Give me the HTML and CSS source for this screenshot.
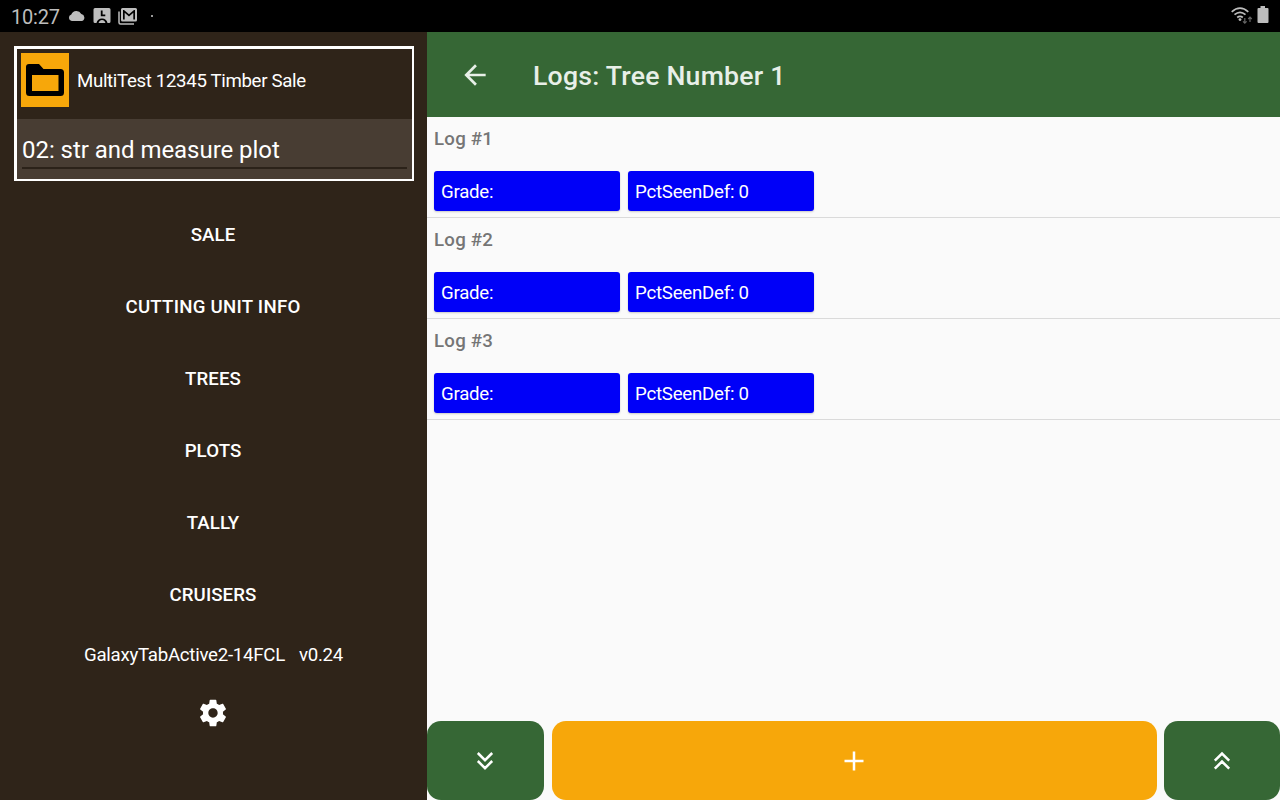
FILE: index.html
```html
<!DOCTYPE html>
<html lang="en">
<head>
<meta charset="utf-8">
<title>Logs</title>
<link rel="stylesheet" href="styles.css">
</head>
<body>
<div class="status">
  <span class="clock">10:27</span>
  <svg class="s-cloud" width="18" height="12" viewBox="0 0 18 12"><path d="M3.800 11A3.400 3.400 0 0 1 3.300 4.400 5.600 5.600 0 0 1 13.300 3.900 3.700 3.700 0 0 1 14 11Z"/></svg>
  <svg class="s-clock" width="18" height="16" viewBox="0 0 18 16"><path fill-rule="evenodd" d="M2 0H16Q17.500 0 17.500 1.500V13.500Q17.500 15 16 15H14.500Q13.500 10.500 9 10.500T3.500 15H2Q.5 15 .5 13.500V1.500Q.5 0 2 0ZM7.800 2.500V8.200H12.300V6.400H9.600V2.500Z"/><path d="M5.500 15Q6.500 12 9 12T12.500 15Z"/></svg>
  <svg class="s-mail" width="20" height="17" viewBox="0 0 20 17"><path d="M1 3.500V14.500Q1 16 2.500 16H16" fill="none" stroke="#bdbdbd" stroke-width="1.500"/><path fill-rule="evenodd" d="M4.500 0H17.500Q19 0 19 1.500V12Q19 13.500 17.500 13.500H4.500Q3 13.500 3 12V1.500Q3 0 4.500 0ZM5 2V11.500H6.700V4.700L11 8.400 15.300 4.700V11.500H17V2H16L11 6.200 6 2Z"/></svg>
  <i class="dot"></i>
  <span class="grow"></span>
  <svg class="s-wifi" width="22" height="18" viewBox="0 0 22 18"><g fill="none" stroke="#bdbdbd" stroke-width="1.700"><path d="M.7 4.800Q9 -2.700 17.300 4.800M3.500 7.700Q9 2.900 14.500 7.700M6.200 10.500Q9 8.100 11.800 10.500"/></g><circle cx="9" cy="12.600" r="1.400"/><path d="M13.800 11V16M12 14.300 13.800 16.200 15.600 14.300M19 15V10.500M17.200 12 19 10.200 20.800 12" fill="none" stroke="#666" stroke-width="1.200"/></svg>
  <svg class="s-batt" width="12" height="18" viewBox="0 0 12 18"><path d="M3.500 0H8V2H10.500Q11.500 2 11.500 3V16Q11.500 17 10.500 17H1.500Q.5 17 .5 16V3Q.5 2 1.500 2H3.500Z"/></svg>
</div>
<div class="app">
  <aside class="side">
    <div class="sale-box">
      <div class="sale-row">
        <span class="folder"><svg width="48" height="54" viewBox="0 0 48 54"><path fill-rule="evenodd" d="M8 11H18L22.500 16H39.500Q43 16 43 19.500V39.500Q43 43 39.500 43H8.500Q5 43 5 39.500V14Q5 11 8 11ZM11 22V38H37.500V22Z"/></svg></span>
        <span class="sale-name">MultiTest 12345 Timber Sale</span>
      </div>
      <div class="spinner"><span>02: str and measure plot</span></div>
    </div>
    <nav class="menu">
      <a>SALE</a><a class="wide">CUTTING UNIT INFO</a><a>TREES</a><a>PLOTS</a><a>TALLY</a><a>CRUISERS</a>
    </nav>
    <div class="device"><span>GalaxyTabActive2-14FCL</span><span>v0.24</span></div>
    <svg class="gear" width="32" height="32" viewBox="0 0 24 24"><path d="M19.430 12.980c.04-.32.07-.64.07-.98s-.03-.66-.07-.98l2.110-1.650c.19-.15.24-.42.12-.64l-2-3.460c-.12-.22-.39-.3-.61-.22l-2.490 1c-.52-.4-1.080-.73-1.690-.98l-.38-2.650C14.460 2.180 14.250 2 14 2h-4c-.25 0-.46.18-.49.42l-.38 2.650c-.61.25-1.170.59-1.690.98l-2.490-1c-.23-.09-.49 0-.61.22l-2 3.460c-.13.22-.07.49.12.64l2.110 1.650c-.04.32-.07.65-.07.98s.03.66.07.98l-2.110 1.650c-.19.15-.24.42-.12.64l2 3.460c.12.22.39.3.61.22l2.490-1c.52.4 1.080.73 1.690.98l.38 2.650c.03.24.24.42.49.42h4c.25 0 .46-.18.49-.42l.38-2.650c.61-.25 1.170-.59 1.690-.98l2.490 1c.23.09.49 0 .61-.22l2-3.460c.12-.22.07-.49-.12-.64l-2.110-1.650zM12 15.500c-1.930 0-3.500-1.570-3.500-3.500s1.570-3.500 3.500-3.500 3.500 1.570 3.500 3.500-1.570 3.500-3.500 3.500z"/></svg>
  </aside>
  <main class="main">
    <header class="bar">
      <svg width="32" height="32" viewBox="0 0 24 24"><path d="M20 11H7.830l5.590-5.590L12 4l-8 8 8 8 1.410-1.410L7.830 13H20v-2z"/></svg>
      <h1>Logs: Tree Number 1</h1>
    </header>
    <section class="logs">
      <article><h2>Log #1</h2><div class="fields"><span class="field">Grade:</span><span class="field">PctSeenDef: 0</span></div></article>
      <article><h2>Log #2</h2><div class="fields"><span class="field">Grade:</span><span class="field">PctSeenDef: 0</span></div></article>
      <article><h2>Log #3</h2><div class="fields"><span class="field">Grade:</span><span class="field">PctSeenDef: 0</span></div></article>
    </section>
    <footer class="actions">
      <button class="btn down"><svg width="18" height="20" viewBox="0 0 18 20"><path d="M1.800 2 9 9.200 16.200 2M1.800 10 9 17.200 16.200 10"/></svg></button>
      <button class="btn add"><svg width="20" height="20" viewBox="0 0 20 20"><path d="M10 .5V19.500M.5 10H19.500"/></svg></button>
      <button class="btn"><svg width="18" height="20" viewBox="0 0 18 20"><path d="M1.800 9.700 9 2.500 16.200 9.700M1.800 17.700 9 10.500 16.200 17.700"/></svg></button>
    </footer>
  </main>
</div>
</body>
</html>
```
FILE: styles.css
```css
* { box-sizing: border-box; }
body { margin: 0; width: 1280px; height: 800px; overflow: hidden; font-family: Roboto, sans-serif; font-size: 18.670px; color: #fff; display: flex; flex-direction: column; }
svg { display: block; flex: none; }
.status { height: 32px; background: #000; color: #bdbdbd; fill: #bdbdbd; display: flex; align-items: flex-start; padding: 0 11px 0 11px; }
.clock { font-size: 20px; line-height: 34px; width: 57px; letter-spacing: -.2px; }
.s-cloud { margin-top: 10px; }
.s-clock { margin: 8px 0 0 7px; }
.s-mail { margin: 8px 0 0 7px; }
.dot { width: 2px; height: 2px; background: #999; margin: 15px 0 0 13px; }
.grow { flex: 1; }
.s-wifi { margin: 7px 0 0; }
.s-batt { margin: 6px 0 0 4px; }
.app { flex: 1; display: flex; min-height: 0; }
.side { flex: none; width: 427px; background: #2f2419; display: flex; flex-direction: column; align-items: center; padding: 14px 1px 0 0; }
.sale-box { width: 400px; height: 135px; border: solid #fff; border-width: 3px 2px 2px 3px; align-self: flex-start; margin-left: 14px; }
.sale-row { height: 70px; padding: 4px 0 0 4px; display: flex; gap: 8px; }
.folder { width: 48px; height: 54px; background: #f7a70a; }
.sale-name { line-height: 56px; letter-spacing: -.34px; }
.spinner { height: 60px; background: #483d33; padding: 13px 5px 0; font-size: 24px; line-height: 37px; letter-spacing: -.04px; }
.spinner span { display: block; height: 37px; border-bottom: 2px solid #2b2219; }
.menu { margin-top: 18px; display: flex; flex-direction: column; align-items: center; font-weight: 500; letter-spacing: .08px; }
.menu a { height: 72px; line-height: 72px; }
.menu .wide { letter-spacing: .25px; }
.device { display: flex; gap: 14px; height: 48px; line-height: 48px; letter-spacing: -.27px; padding-left: 1px; }
.gear { fill: #fff; margin-top: 18px; }
.main { flex: 1; background: #fafafa; display: flex; flex-direction: column; }
.bar { height: 85px; background: #366735; display: flex; align-items: center; padding-left: 32px; fill: #e8efe8; color: #e8efe8; }
.bar h1 { margin: 2px 0 0 42px; font-size: 26.670px; font-weight: 500; line-height: 32px; letter-spacing: .22px; }
.logs { flex: 1; }
article { height: 101px; border-bottom: 1px solid #dadada; padding: 7px; color: #757575; }
h2 { font-size: 18.670px; font-weight: 500; margin: 0; line-height: 30px; height: 47px; letter-spacing: .25px; }
.fields { display: flex; gap: 8px; }
.field { width: 186px; height: 40px; line-height: 42px; background: #0000f8; border-radius: 3px; color: #fff; padding-left: 7px; box-shadow: 0 1px 2px #0003; letter-spacing: -.24px; }
.actions { height: 79px; display: grid; grid-template-columns: 117px 620px 116px; }
.btn { border: 0; padding: 0; border-radius: 14px; background: #366735; display: flex; align-items: center; justify-content: center; fill: none; stroke: #fff; stroke-width: 2.500; }
.down { padding-right: 1px; }
.add { background: #f7a70a; margin: 0 7px 0 8px; padding-right: 1px; }
```
